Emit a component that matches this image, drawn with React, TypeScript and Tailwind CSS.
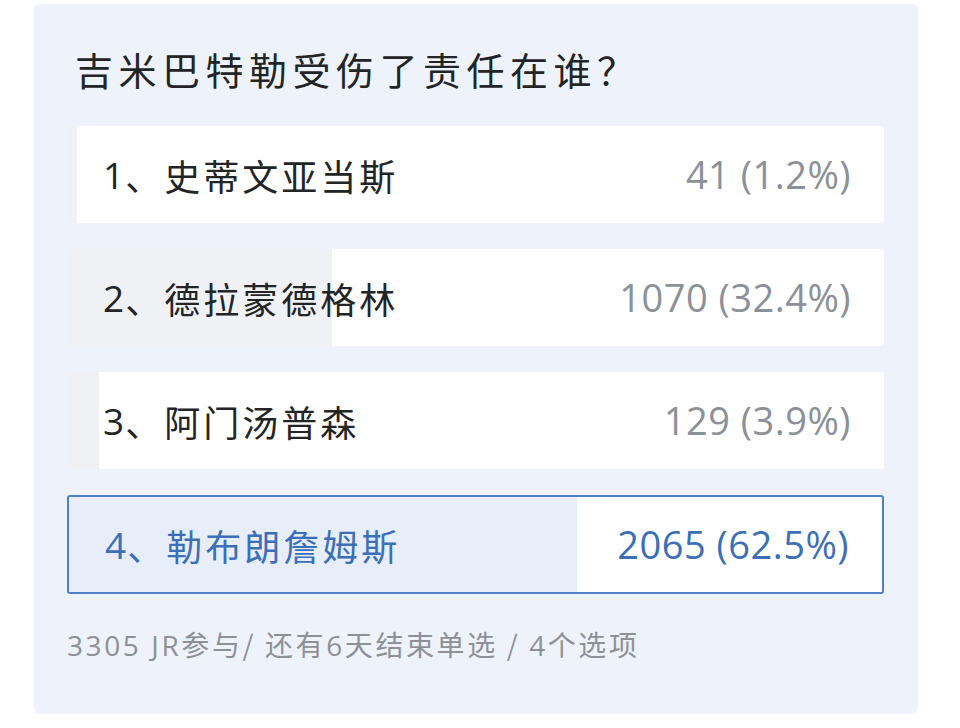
import React from "react";

type Opt = { label: string; count: number; pct: number; selected?: boolean };

const options: Opt[] = [
  { label: "史蒂文亚当斯", count: 41, pct: 1.2 },
  { label: "德拉蒙德格林", count: 1070, pct: 32.4 },
  { label: "阿门汤普森", count: 129, pct: 3.9 },
  { label: "勒布朗詹姆斯", count: 2065, pct: 62.5, selected: true },
];

function Row({ o, i }: { o: Opt; i: number }) {
  return (
    <div
      className={
        "relative rounded-[3px] overflow-hidden bg-white flex items-center justify-between pl-[36px] pr-[33px] " +
        (o.selected ? "h-[99px] border-2 border-[#4f7fc4]" : "h-[97px]")
      }
    >
      <div
        className={"absolute left-0 top-0 bottom-0 " + (o.selected ? "bg-[#e7eefa]" : "bg-[#eff1f4]")}
        style={{ width: `${o.pct}%` }}
      />
      <div
        className={
          "relative flex items-center text-[36px] font-['Noto_Sans_CJK_SC',sans-serif] " +
          (o.selected ? "text-[#3c6fb6]" : "text-[#222426]")
        }
      >
        <span className="text-[37px] tracking-[1px] font-['Open_Sans',sans-serif]">{i + 1}</span>
        <span className="tracking-[3px]">、{o.label}</span>
      </div>
      <div
        className={
          "relative text-[38px] tracking-[0.5px] font-['Open_Sans',sans-serif] " +
          (o.selected ? "text-[#3c6fb6]" : "text-[#8b9099]")
        }
      >
        {o.count} ({o.pct}%)
      </div>
    </div>
  );
}

export default function App() {
  return (
    <div className="w-[960px] h-[728px] bg-white pt-[4px] pl-[34px]">
      <div className="w-[884px] h-[710px] rounded-[6px] bg-[#eef3fb] pl-[33px] pr-[34px]">
        <div className="pt-[40px] pl-[8px] h-[122px] text-[38px] tracking-[5.5px] text-[#222426] leading-[50px] font-['Noto_Sans_CJK_SC',sans-serif]">
          吉米巴特勒受伤了责任在谁？
        </div>
        <div className="flex flex-col gap-[26px]">
          {options.map((o, i) => (
            <Row key={i} o={o} i={i} />
          ))}
        </div>
        <div className="mt-[30px] text-[28px] text-[#8d9197] leading-[40px] tracking-[2.6px] font-['Noto_Sans_CJK_SC',sans-serif]">
          <span className="font-['Open_Sans',sans-serif]">3305 JR</span>参与/ 还有
          <span className="font-['Open_Sans',sans-serif]">6</span>天结束单选 /{" "}
          <span className="font-['Open_Sans',sans-serif]">4</span>个选项
        </div>
      </div>
    </div>
  );
}
